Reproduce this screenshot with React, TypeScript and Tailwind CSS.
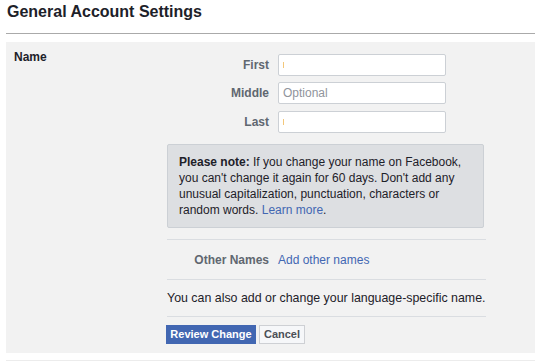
import React from "react";

function Field({ label, placeholder, caret }: { label: string; placeholder?: string; caret?: boolean }) {
  return (
    <div className="flex items-center h-[22px]">
      <div className="w-[102px] text-right text-[12px] font-bold text-[#606770] leading-[16px]">{label}</div>
      <div className="ml-[9px] w-[168px] h-[22px] bg-white border border-[#ccd0d5] rounded-[2px] flex items-center pl-[4px] relative">
        {placeholder ? (
          <span className="text-[12px] text-[#90949c] leading-[16px]">{placeholder}</span>
        ) : null}
        {caret ? <span className="block w-px h-[6px] bg-[#f3c77a]" /> : null}
      </div>
    </div>
  );
}

export default function App() {
  return (
    <div className="w-[535px] h-[363px] bg-white pl-[6px] font-['Liberation_Sans',Arial,sans-serif] overflow-hidden">
      <h2 className="pl-[1px] pt-[2px] h-[33px] text-[16px] leading-[20px] font-bold text-[#1d2129]">
        General Account Settings
      </h2>
      <div className="h-px bg-[#aaaaaa]" />
      <div className="mt-[8px] h-[311px] bg-[#f2f2f2] flex">
        <div className="w-[161px] pl-[8px] pt-[7px] text-[12px] leading-[16px] font-bold text-[#1d2129]">Name</div>
        <div className="w-[319px] pt-[12px] flex flex-col">
          <Field label="First" caret />
          <div className="mt-[6px]">
            <Field label="Middle" placeholder="Optional" />
          </div>
          <div className="mt-[7px]">
            <Field label="Last" caret />
          </div>
          <div className="mt-[11px] w-[317px] border border-[#ccd0d5] bg-[#dddfe2] rounded-[2px] pl-[11px] pr-[8px] py-[9px] text-[12px] leading-[16px] text-[#1d2129]">
            <span className="font-bold">Please note:</span> If you change your name on Facebook, you can't change it again for 60 days. Don't add any unusual capitalization, punctuation, characters or random words.{" "}
            <span className="text-[#4267b2]">Learn more</span>.
          </div>
          <div className="mt-[11px] h-px bg-[#dadde1]" />
          <div className="h-[39px] flex items-center text-[12px] leading-[16px]">
            <div className="w-[102px] text-right font-bold text-[#606770]">Other Names</div>
            <div className="ml-[9px] text-[#4267b2]">Add other names</div>
          </div>
          <div className="h-px bg-[#dadde1]" />
          <div className="h-[36px] flex items-center text-[12.4px] leading-[16px] text-[#1d2129] whitespace-nowrap">
            You can also add or change your language-specific name.
          </div>
          <div className="h-px bg-[#dadde1]" />
          <div className="mt-[8px] flex gap-[3px] -ml-px">
            <button className="h-[19px] w-[90px] bg-[#4267b2] border border-[#4267b2] text-white text-[11px] font-bold leading-[17px] text-center">
              Review Change
            </button>
            <button className="h-[19px] w-[46px] bg-[#f6f7f9] border border-[#ced0d4] text-[#4b4f56] text-[11px] font-bold leading-[17px] text-center">
              Cancel
            </button>
          </div>
        </div>
      </div>
      <div className="mt-[7px] h-px bg-[#ececec]" />
    </div>
  );
}
